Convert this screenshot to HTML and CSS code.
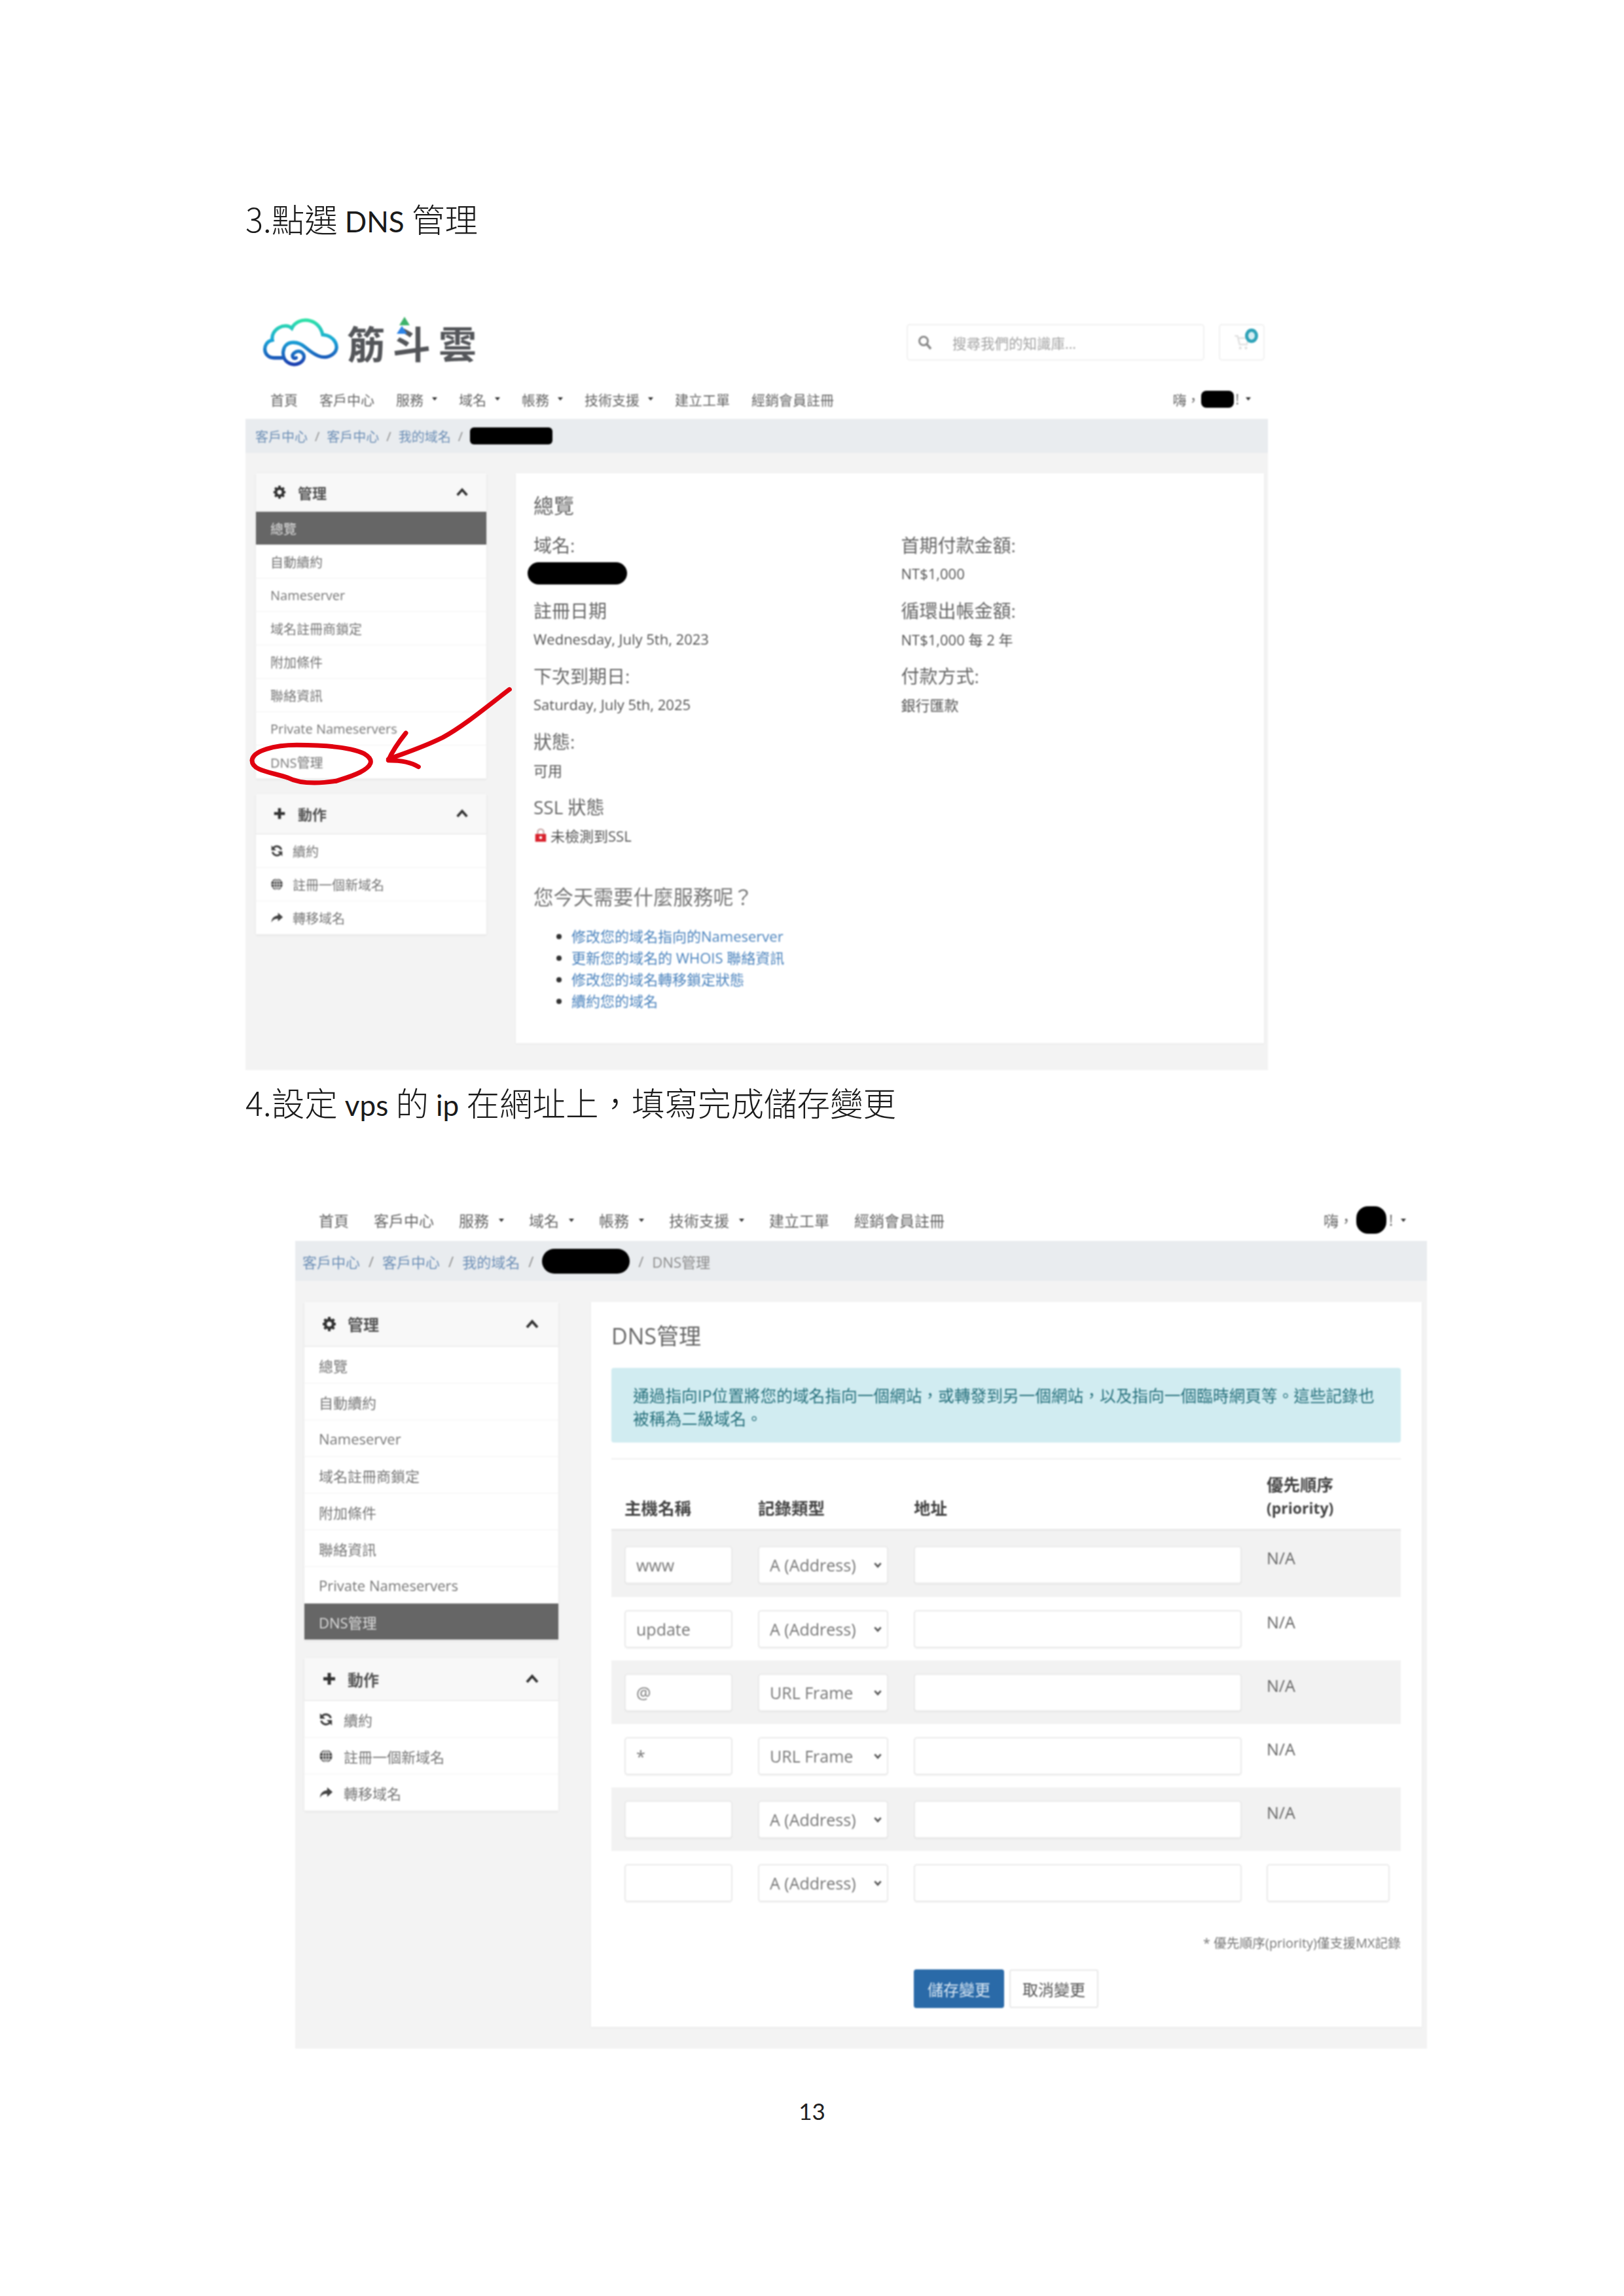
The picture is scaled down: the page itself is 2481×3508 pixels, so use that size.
FILE: index.html
```html
<!DOCTYPE html>
<html lang="zh-Hant">
<head>
<meta charset="utf-8">
<title>DNS 管理</title>
<link rel="stylesheet" href="styles.css">
</head>
<body>
<svg class="defs" width="0" height="0" aria-hidden="true">
  <symbol id="i-gear" viewBox="0 0 24 24"><circle cx="12" cy="12" r="6" fill="none" stroke="currentColor" stroke-width="4.5"/><path d="M12 1v5M12 18v5M2 12h5M17 12h5M4.6 4.6l3.5 3.5M15.9 15.9l3.5 3.5M4.6 19.4l3.5-3.5M15.9 8.1l3.5-3.5" stroke="currentColor" stroke-width="4" fill="none"/></symbol>
  <symbol id="i-plus" viewBox="0 0 24 24"><path d="M12 3v18M3 12h18" stroke="currentColor" stroke-width="5" fill="none"/></symbol>
  <symbol id="i-up" viewBox="0 0 24 24"><path d="M4 17l8-9 8 9" stroke="currentColor" stroke-width="4" fill="none"/></symbol>
  <symbol id="i-down" viewBox="0 0 24 24"><path d="M5 8l7 8 7-8" stroke="currentColor" stroke-width="4" fill="none"/></symbol>
  <symbol id="i-sync" viewBox="0 0 24 24"><path d="M20 10A8.5 8.5 0 0 0 5.5 6.5M4 14a8.5 8.5 0 0 0 14.5 3.5" stroke="currentColor" stroke-width="3.5" fill="none"/><path d="M2 2v9h9zM22 22v-9h-9z" fill="currentColor"/></symbol>
  <symbol id="i-globe" viewBox="0 0 24 24"><circle cx="12" cy="12" r="10.5" fill="currentColor"/><path d="M12 1.5v21M1.5 12h21M4 6.5h16M4 17.5h16" stroke="#fff" stroke-width="1.3" fill="none"/><ellipse cx="12" cy="12" rx="5" ry="10.5" stroke="#fff" stroke-width="1.3" fill="none"/></symbol>
  <symbol id="i-share" viewBox="0 0 24 24"><path d="M14 3l9 8-9 8v-5C8 14 4 16 2 21c0-7 4-12 12-13z" fill="currentColor"/></symbol>
  <symbol id="i-search" viewBox="0 0 24 24"><circle cx="10" cy="10" r="6.5" fill="none" stroke="currentColor" stroke-width="3"/><path d="M15 15l6 7" stroke="currentColor" stroke-width="3.5"/></symbol>
  <symbol id="i-cart" viewBox="0 0 24 24"><path d="M2 3h4l3 12h10l3-9H7" fill="none" stroke="currentColor" stroke-width="2.5"/><circle cx="10" cy="20" r="2" fill="currentColor"/><circle cx="18" cy="20" r="2" fill="currentColor"/></symbol>
  <symbol id="i-lock" viewBox="0 0 24 24"><path d="M7 11V7a5 5 0 0 1 10 0v4" fill="none" stroke="#c9a7a7" stroke-width="2.5"/><rect x="3" y="10" width="18" height="13" fill="#d9232e"/><circle cx="12" cy="16" r="2.5" fill="#fff"/></symbol>
</svg>

<main class="page">
  <h2 class="step">3.點選 <span class="lat">DNS</span> 管理</h2>

  <section class="shot shot-a">
    <div class="shot-inner">
      <header class="brand-row">
        <div class="brand">
          <svg class="cloud" viewBox="50 60 370 260" aria-hidden="true">
            <defs>
              <linearGradient id="cg" x1="0" y1="0" x2="0" y2="1">
                <stop offset="0" stop-color="#2fe2a8"/>
                <stop offset=".45" stop-color="#19a6d8"/>
                <stop offset="1" stop-color="#1b3fb0"/>
              </linearGradient>
            </defs>
            <path d="M150 262H112C60 262 55 190 105 180C95 130 165 95 195 125C220 70 320 72 338 155C400 160 420 220 385 245C340 280 290 240 260 215C220 180 160 180 155 235C150 290 215 310 245 275C265 250 235 215 205 240C190 255 205 270 215 262" fill="none" stroke="url(#cg)" stroke-width="16" stroke-linecap="round"/>
          </svg>
          <div class="brand-name">筋<span class="dou">斗<i class="tri tri-g"></i><i class="tri tri-b"></i></span>雲</div>
        </div>
        <div class="brand-tools">
          <div class="search"><svg class="ico"><use href="#i-search"/></svg><span>搜尋我們的知識庫...</span></div>
          <div class="cart"><svg class="ico"><use href="#i-cart"/></svg><b class="badge"></b></div>
        </div>
      </header>
      <nav class="nav">
        <a>首頁</a><a>客戶中心</a><a class="dd">服務</a><a class="dd">域名</a><a class="dd">帳務</a><a class="dd">技術支援</a><a>建立工單</a><a>經銷會員註冊</a>
        <a class="dd user">嗨，<i class="blob blob-user"></i>!</a>
      </nav>
      <div class="crumbs"><a>客戶中心</a><em>/</em><a>客戶中心</a><em>/</em><a>我的域名</a><em>/</em><i class="blob blob-crumb"></i></div>
      <div class="content">
        <aside class="side">
          <div class="panel">
            <div class="panel-head"><svg class="ico"><use href="#i-gear"/></svg><b>管理</b><svg class="ico up"><use href="#i-up"/></svg></div>
            <a class="item on">總覽</a><a class="item">自動續約</a><a class="item">Nameserver</a><a class="item">域名註冊商鎖定</a><a class="item">附加條件</a><a class="item">聯絡資訊</a><a class="item">Private Nameservers</a><a class="item">DNS管理</a>
          </div>
          <div class="panel">
            <div class="panel-head"><svg class="ico"><use href="#i-plus"/></svg><b>動作</b><svg class="ico up"><use href="#i-up"/></svg></div>
            <a class="item"><svg class="ico"><use href="#i-sync"/></svg>續約</a><a class="item"><svg class="ico"><use href="#i-globe"/></svg>註冊一個新域名</a><a class="item"><svg class="ico"><use href="#i-share"/></svg>轉移域名</a>
          </div>
        </aside>
        <article class="card card-a">
          <h3 class="title">總覽</h3>
          <div class="fields">
            <div class="col">
              <div class="field"><h4>域名:</h4><div class="val"><i class="blob blob-domain"></i></div></div>
              <div class="field"><h4>註冊日期</h4><div class="val">Wednesday, July 5th, 2023</div></div>
              <div class="field"><h4>下次到期日:</h4><div class="val">Saturday, July 5th, 2025</div></div>
              <div class="field"><h4>狀態:</h4><div class="val">可用</div></div>
              <div class="field"><h4>SSL 狀態</h4><div class="val ssl"><svg class="ico"><use href="#i-lock"/></svg>未檢測到SSL</div></div>
            </div>
            <div class="col">
              <div class="field"><h4>首期付款金額:</h4><div class="val">NT$1,000</div></div>
              <div class="field"><h4>循環出帳金額:</h4><div class="val">NT$1,000 每 2 年</div></div>
              <div class="field"><h4>付款方式:</h4><div class="val">銀行匯款</div></div>
            </div>
          </div>
          <h3 class="ask">您今天需要什麼服務呢？</h3>
          <ul class="links">
            <li><a>修改您的域名指向的Nameserver</a></li>
            <li><a>更新您的域名的 WHOIS 聯絡資訊</a></li>
            <li><a>修改您的域名轉移鎖定狀態</a></li>
            <li><a>續約您的域名</a></li>
          </ul>
        </article>
      </div>
    </div>
    <svg class="markup" viewBox="0 0 1380 600" aria-hidden="true">
      <path d="M460 520C380 532 300 535 240 505C170 480 75 475 75 425C80 380 180 355 280 355C400 355 530 365 590 395C640 425 620 455 570 480C530 500 490 510 460 520" />
      <path d="M1255 100C1150 180 1050 265 950 320C860 365 780 390 700 420" />
      <path d="M780 300C740 350 715 390 700 425C740 425 800 430 838 455" />
    </svg>
  </section>

  <h2 class="step step-b">4.設定 <span class="lat">vps</span> 的 <span class="lat">ip</span> 在網址上，填寫完成儲存變更</h2>

  <section class="shot shot-b">
    <div class="shot-inner">
      <nav class="nav">
        <a>首頁</a><a>客戶中心</a><a class="dd">服務</a><a class="dd">域名</a><a class="dd">帳務</a><a class="dd">技術支援</a><a>建立工單</a><a>經銷會員註冊</a>
        <a class="dd user">嗨，<i class="blob blob-user"></i>!</a>
      </nav>
      <div class="crumbs"><a>客戶中心</a><em>/</em><a>客戶中心</a><em>/</em><a>我的域名</a><em>/</em><i class="blob blob-crumb"></i><em>/</em><span>DNS管理</span></div>
      <div class="content">
        <aside class="side">
          <div class="panel">
            <div class="panel-head"><svg class="ico"><use href="#i-gear"/></svg><b>管理</b><svg class="ico up"><use href="#i-up"/></svg></div>
            <a class="item">總覽</a><a class="item">自動續約</a><a class="item">Nameserver</a><a class="item">域名註冊商鎖定</a><a class="item">附加條件</a><a class="item">聯絡資訊</a><a class="item">Private Nameservers</a><a class="item on">DNS管理</a>
          </div>
          <div class="panel">
            <div class="panel-head"><svg class="ico"><use href="#i-plus"/></svg><b>動作</b><svg class="ico up"><use href="#i-up"/></svg></div>
            <a class="item"><svg class="ico"><use href="#i-sync"/></svg>續約</a><a class="item"><svg class="ico"><use href="#i-globe"/></svg>註冊一個新域名</a><a class="item"><svg class="ico"><use href="#i-share"/></svg>轉移域名</a>
          </div>
        </aside>
        <article class="card card-b">
          <h3 class="title">DNS管理</h3>
          <p class="alert">通過指向IP位置將您的域名指向一個網站，或轉發到另一個網站，以及指向一個臨時網頁等。這些記錄也被稱為二級域名。</p>
          <hr class="rule">
          <div class="dns-head">
            <b>主機名稱</b><b>記錄類型</b><b>地址</b><b>優先順序<br><span class="en">(priority)</span></b>
          </div>
          <div class="dns-row"><div class="input">www</div><div class="select">A (Address)<svg class="ico"><use href="#i-down"/></svg></div><div class="input"></div><div class="na">N/A</div></div>
          <div class="dns-row"><div class="input">update</div><div class="select">A (Address)<svg class="ico"><use href="#i-down"/></svg></div><div class="input"></div><div class="na">N/A</div></div>
          <div class="dns-row"><div class="input">@</div><div class="select">URL Frame<svg class="ico"><use href="#i-down"/></svg></div><div class="input"></div><div class="na">N/A</div></div>
          <div class="dns-row"><div class="input">*</div><div class="select">URL Frame<svg class="ico"><use href="#i-down"/></svg></div><div class="input"></div><div class="na">N/A</div></div>
          <div class="dns-row"><div class="input"></div><div class="select">A (Address)<svg class="ico"><use href="#i-down"/></svg></div><div class="input"></div><div class="na">N/A</div></div>
          <div class="dns-row"><div class="input"></div><div class="select">A (Address)<svg class="ico"><use href="#i-down"/></svg></div><div class="input"></div><div class="input"></div></div>
          <p class="note">* 優先順序(priority)僅支援MX記錄</p>
          <div class="actions"><a class="btn primary">儲存變更</a><a class="btn">取消變更</a></div>
        </article>
      </div>
    </div>
  </section>

  <footer class="page-no">13</footer>
</main>
</body>
</html>
```

FILE: styles.css
```css
* { box-sizing: border-box; }
html, body { margin: 0; padding: 0; background: #fff; }
body { font-family: "Open Sans", "Noto Sans CJK TC", sans-serif; color: #555; }
.defs { position: absolute; }
.page { width: 2481px; height: 3508px; padding-top: 306px; overflow: hidden; }
a { color: inherit; text-decoration: none; }
h2, h3, h4, p, ul { margin: 0; padding: 0; font-weight: 400; }
i, em { font-style: normal; }

.step { margin-left: 375px; height: 60px; font: 300 50.5px/55px "Noto Sans CJK TC", sans-serif; color: #1a1a1a; white-space: nowrap; }
.step .lat { font-family: Lato, sans-serif; font-size: 44px; font-weight: 400; }
.step-b { margin-top: 21px; }

.shot { position: relative; }
.shot-inner { filter: blur(0.9px); }
.ico { width: 1em; height: 1em; flex: none; }
.blob { display: inline-block; background: #000; }

.shot-a { margin: 107px 0 0 375px; width: 1562px; }
.shot-b { margin: 120px 0 0 451px; width: 1729px; }

/* brand row */
.brand-row { display: flex; justify-content: space-between; align-items: center; height: 100px; padding: 0 5px 0 23px; }
.brand { display: flex; align-items: center; gap: 10px; }
.cloud { width: 122px; height: 86px; }
.brand-name { font: 700 58px/1 "Noto Sans CJK TC", sans-serif; color: #54565a; letter-spacing: 12px; }
.dou { position: relative; }
.tri { position: absolute; width: 0; height: 0; border-left: 8px solid transparent; border-right: 8px solid transparent; }
.tri-g { left: 10px; top: 3px; border-bottom: 13px solid #3fb36b; }
.tri-b { left: 6px; top: 17px; border-bottom: 12px solid #2c83e6; }
.brand-tools { display: flex; gap: 22px; }
.search, .cart { height: 56px; border: 2px solid #f1f1f1; border-radius: 5px; display: flex; align-items: center; }
.search { width: 455px; padding-left: 14px; gap: 30px; font-size: 21.5px; color: #a5a5a5; }
.search .ico { font-size: 24px; color: #8a8a8a; }
.cart { position: relative; width: 70px; justify-content: center; }
.cart .ico { font-size: 26px; color: #e2e2e2; }
.badge { position: absolute; right: 8px; top: 5px; width: 20px; height: 22px; border-radius: 50%; border: 5px solid #2fa3b8; background: #d6eef3; }

/* nav */
.nav { display: flex; align-items: center; }
.nav a { display: flex; align-items: center; white-space: nowrap; color: #666; }
.nav .dd::after { content: ""; border-left: 4px solid transparent; border-right: 4px solid transparent; border-top: 5px solid #333; }
.nav .user { margin-left: auto; }
.blob-user { margin: 0 2px; }
.shot-a .nav { height: 57px; margin-top: 10px; padding: 0 26px 4px 38px; gap: 33px; font-size: 21px; }
.shot-a .dd::after { margin-left: 13px; }
.shot-a .user::after { margin-left: 10px; }
.shot-a .blob-user { width: 50px; height: 26px; border-radius: 8px; }
.shot-b .nav { height: 60px; padding: 0 32px 4px 36px; gap: 38px; font-size: 23px; }
.shot-b .dd::after { margin-left: 15px; }
.shot-b .user::after { margin-left: 12px; }
.shot-b .blob-user { width: 46px; height: 42px; margin: 0 4px; border-radius: 18px; }

/* breadcrumbs */
.crumbs { display: flex; align-items: center; background: #e9ecef; color: #8a8a8a; white-space: nowrap; }
.crumbs a { color: #6d8fb6; }
.crumbs em { color: #8c8c8c; }
.shot-a .crumbs { height: 52px; padding-left: 15px; gap: 11px; font-size: 20px; }
.shot-a .blob-crumb { width: 126px; height: 26px; border-radius: 6px; }
.shot-b .crumbs { height: 61px; padding-left: 11px; gap: 13px; font-size: 22px; }
.shot-b .blob-crumb { width: 134px; height: 38px; border-radius: 19px; }

/* content */
.content { display: flex; align-items: flex-start; background: #f3f3f3; }
.shot-a .content { height: 943px; padding: 31px 0 0 16px; gap: 45px; }
.shot-b .content { height: 1173px; padding: 32px 0 0 14px; gap: 50px; }
.side { display: flex; flex-direction: column; }
.shot-a .side { width: 352px; gap: 23px; }
.shot-b .side { width: 388px; gap: 27px; }
.panel { background: #fff; box-shadow: 0 1px 3px rgba(0,0,0,.08); }
.panel-head { display: flex; align-items: center; background: #f8f8f8; border-bottom: 2px solid #eee; color: #333; }
.panel-head b { font-weight: 700; color: #555; }
.panel-head .up { margin-left: auto; }
.item { display: flex; align-items: center; color: #777; border-bottom: 1px solid #f4f4f4; white-space: nowrap; }
.item .ico { color: #444; }
.item.on { background: #666; color: #ddd; }
.shot-a .panel-head { height: 59px; padding: 0 26px 0 25px; gap: 17px; font-size: 22px; }
.shot-a .panel + .panel .panel-head { height: 62px; }
.shot-a .item { height: 51px; padding-left: 22px; font-size: 20px; gap: 14px; }
.shot-b .panel-head { height: 69px; padding: 0 28px 0 26px; gap: 16px; font-size: 24px; }
.shot-b .panel + .panel .panel-head { height: 66px; }
.shot-b .item { height: 56px; padding-left: 22px; font-size: 22px; gap: 16px; }

/* card */
.card { background: #fff; box-shadow: 0 1px 3px rgba(0,0,0,.06); }
.card-a { width: 1143px; height: 871px; padding: 30px 0 0 27px; }
.card-a .title { font-size: 31px; line-height: 38px; color: #666; }
.fields { display: flex; margin-top: 21px; }
.col { width: 565px; display: flex; flex-direction: column; gap: 14px; }
.col:first-child { width: 565px; margin-right: 7px; }
.field h4 { font-size: 28px; line-height: 42px; color: #666; }
.val { display: flex; align-items: center; height: 44px; font-size: 22px; color: #555; }
.blob-domain { width: 152px; height: 34px; margin-left: -9px; border-radius: 17px; }
.ssl { gap: 4px; }
.ssl .ico { font-size: 22px; }
.ask { margin-top: 50px; font-size: 30.5px; line-height: 44px; color: #777; }
.links { margin: 22px 0 0 58px; list-style: disc; font-size: 22px; line-height: 33px; color: #333; }
.links a { color: #4b83bd; }

.card-b { width: 1269px; height: 1108px; padding: 34px 32px 0 31px; }
.card-b .title { font-size: 34px; line-height: 36px; color: #666; }
.alert { height: 114px; margin-top: 31px; padding: 25px 33px 0; background: #d1ecf1; border-radius: 4px; color: #27707c; font-size: 24.7px; line-height: 35px; }
.rule { height: 2px; margin: 24px 0 0; border: 0; background: #f0f0f0; }
.dns-head, .dns-row { display: grid; grid-template-columns: 204px 238px 539px 188px; padding-left: 20px; }
.dns-head { height: 109px; align-items: end; padding-bottom: 14px; border-bottom: 3px solid #e8e8e8; font-size: 25.5px; line-height: 35px; color: #444; }
.dns-head .en { font-size: 23px; }
.dns-row { height: 97px; padding-top: 20px; align-items: start; font-size: 25px; color: #777; }
.dns-row:nth-of-type(even) { background: #f2f2f2; }
.dns-head + .dns-row { height: 101px; padding-top: 23px; }
.input, .select { height: 58px; background: #fff; border: 2px solid #ebebeb; border-radius: 5px; box-shadow: 0 1px 2px rgba(0,0,0,.06); display: flex; align-items: center; padding-left: 16px; white-space: nowrap; }
.input { width: 165px; }
.select { width: 199px; justify-content: space-between; padding-right: 6px; }
.select .ico { font-size: 16px; color: #555; }
.dns-row .input:nth-child(3) { width: 501px; }
.dns-row .input:nth-child(4) { width: 188px; }
.na { line-height: 36px; font-size: 25px; color: #666; }
.note { margin-top: 29px; line-height: 30px; text-align: right; font-size: 19.8px; color: #777; }
.actions { display: flex; justify-content: center; gap: 8px; margin-top: 25px; }
.btn { width: 136px; height: 59px; display: flex; align-items: center; justify-content: center; background: #fff; border: 2px solid #e8e8e8; border-radius: 4px; font-size: 24px; color: #555; }
.btn.primary { width: 138px; background: #2a6aa8; border-color: #2a6aa8; color: #d8e6f2; }

/* annotation */
.markup { position: absolute; left: -15px; top: 547px; width: 460px; height: 200px; overflow: visible; filter: blur(0.6px); }
.markup path { fill: none; stroke: #e0000f; stroke-width: 21; stroke-linecap: round; stroke-linejoin: round; }

.page-no { margin-top: 70px; text-align: center; font: 400 35px/50px Lato, sans-serif; color: #222; }
```
